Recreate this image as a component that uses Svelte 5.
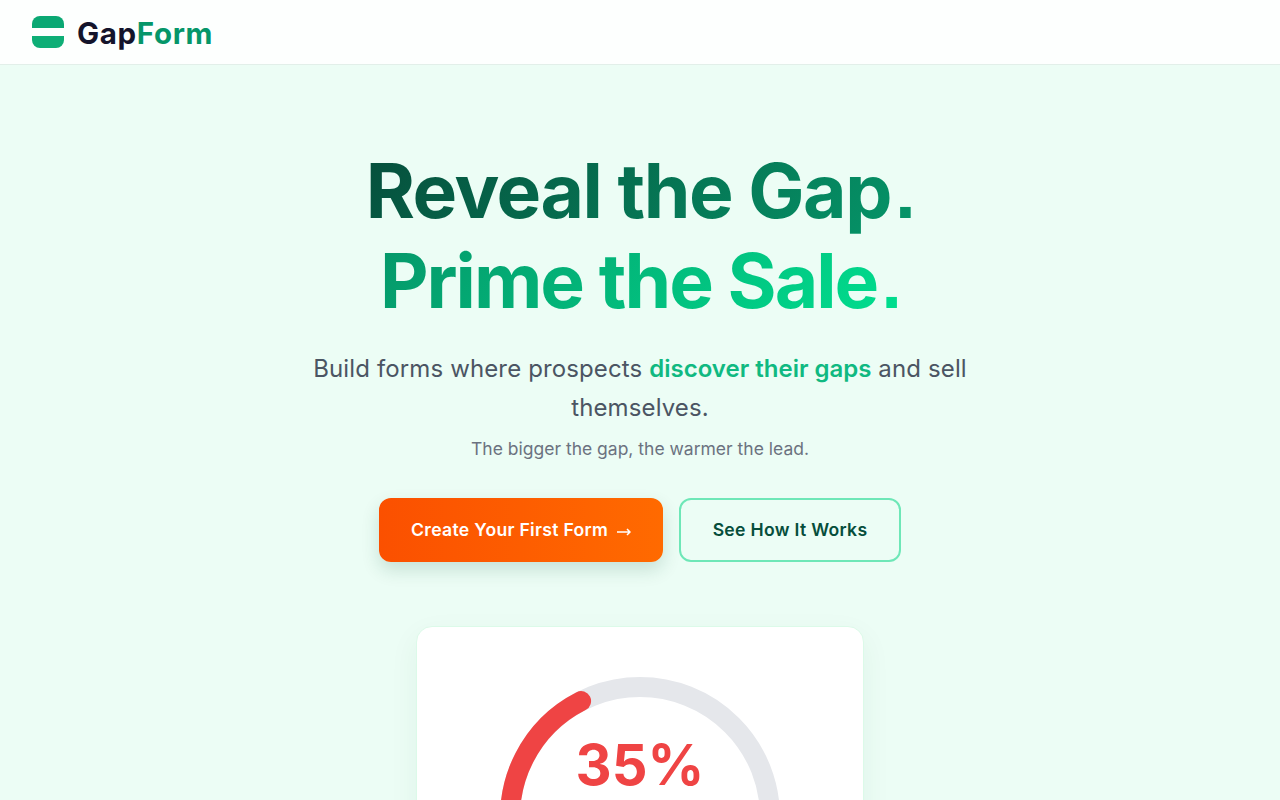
<script>
  const r = 130;
  const c = 2 * Math.PI * r;
  const pct = 35;
  const dash = `${(c * pct) / 100} ${c}`;
</script>

<div class="page">
  <header class="nav">
    <div class="brand">
      <svg class="logo" viewBox="0 0 32 32" aria-hidden="true">
        <path d="M8 0h16a8 8 0 0 1 8 8v4H0V8a8 8 0 0 1 8-8z" fill="#0aa873" />
        <path d="M0 20h32v4a8 8 0 0 1-8 8H8a8 8 0 0 1-8-8z" fill="#0eae76" />
      </svg>
      <span class="word">Gap<span class="accent">Form</span></span>
    </div>
  </header>

  <main class="hero">
    <h1>
      <span class="l1">Reveal the Gap<i class="dot">.</i></span>
      <span class="l2">Prime the Sale<i class="dot">.</i></span>
    </h1>
    <p class="lead">Build forms where prospects <strong>discover their gaps</strong> and sell themselves.</p>
    <p class="note">The bigger the gap, the warmer the lead.</p>
    <div class="actions">
      <button class="primary">
        Create Your First Form
        <svg class="arrow" viewBox="0 0 14 8" width="14" height="8" aria-hidden="true">
          <path d="M0 4h13M10 1l3 3-3 3" fill="none" stroke="#fff" stroke-width="1.5" />
        </svg>
      </button>
      <button class="secondary">See How It Works</button>
    </div>

    <section class="card">
      <div class="gauge">
        <svg viewBox="0 0 280 280" width="280" height="280" aria-hidden="true">
          <circle cx="140" cy="140" r={r} fill="none" stroke="#e5e7eb" stroke-width="20" />
          <circle cx="140" cy="140" r={r} fill="none" stroke="#ef4444" stroke-width="20" stroke-linecap="round"
            stroke-dasharray={dash} transform="rotate(-243 140 140)" />
        </svg>
        <div class="value">35%</div>
      </div>
    </section>
  </main>
</div>

<style>
  :global(body) {
    margin: 0;
    background: #ecfdf5;
    overflow: hidden;
  }
  .page {
    font-family: Inter, "Liberation Sans", sans-serif;
    height: 800px;
    overflow: hidden;
    background: #ecfdf5;
  }
  .nav {
    height: 64px;
    display: flex;
    align-items: center;
    padding: 0 32px;
    background: #fdfffe;
    border-bottom: 1px solid #e2efe9;
  }
  .brand {
    display: flex;
    align-items: center;
    gap: 13px;
  }
  .logo {
    width: 32px;
    height: 32px;
    display: block;
  }
  .word {
    padding-top: 2px;
    font-size: 29.5px;
    font-weight: 700;
    letter-spacing: 0.65px;
    color: #14142b;
  }
  .accent {
    color: #059669;
  }
  .hero {
    display: flex;
    flex-direction: column;
    align-items: center;
    padding-top: 81px;
    text-align: center;
  }
  h1 {
    margin: 0;
    font-size: 75px;
    line-height: 90px;
    font-weight: 700;
  }
  h1 > span {
    display: block;
    width: fit-content;
    margin: 0 auto;
    -webkit-background-clip: text;
    background-clip: text;
    color: transparent;
  }
  .dot {
    font-family: "Liberation Sans", sans-serif;
    font-style: normal;
    line-height: 0;
    margin-left: 4px;
  }
  .l1 {
    letter-spacing: -1.5px;
    background-image: linear-gradient(135deg, #064e3b, #059669);
  }
  .l2 {
    letter-spacing: -2px;
    background-image: linear-gradient(135deg, #059669, #00e08f);
  }
  .lead {
    margin: 23px 0 0;
    width: 672px;
    font-size: 24px;
    line-height: 39px;
    letter-spacing: 0.13px;
    color: #4b5563;
  }
  .lead strong {
    font-weight: 600;
    letter-spacing: 0;
    color: #10b981;
  }
  .note {
    margin: 8px 0 0;
    font-size: 17.5px;
    line-height: 27px;
    color: #6b7280;
  }
  .actions {
    display: flex;
    gap: 16px;
    margin-top: 36px;
  }
  button {
    font-family: inherit;
    font-size: 17.6px;
    font-weight: 600;
    letter-spacing: 0.3px;
    height: 64px;
    padding: 0 0 2px;
    border-radius: 12px;
    cursor: pointer;
    box-sizing: border-box;
  }
  .primary {
    width: 284px;
    border: 0;
    color: #fff;
    background: linear-gradient(90deg, #fb5000, #ff6a00);
    box-shadow: 0 8px 18px rgba(6, 78, 59, 0.16);
  }
  .arrow {
    margin-left: 4px;
  }
  .secondary {
    width: 222px;
    border: 2px solid #6ee7b7;
    background: transparent;
    color: #064e3b;
  }
  .card {
    margin-top: 64px;
    width: 448px;
    box-sizing: border-box;
    padding: 50px 0 48px;
    background: #fff;
    border: 1px solid #dcfae9;
    border-radius: 16px;
    box-shadow: 0 10px 30px rgba(6, 78, 59, 0.06);
    display: flex;
    justify-content: center;
  }
  .gauge {
    position: relative;
    width: 280px;
    height: 280px;
  }
  .gauge svg {
    display: block;
  }
  .value {
    position: absolute;
    left: 0;
    right: 0;
    top: 52px;
    font-size: 56px;
    line-height: 72px;
    font-weight: 700;
    color: #ef4444;
  }
</style>
